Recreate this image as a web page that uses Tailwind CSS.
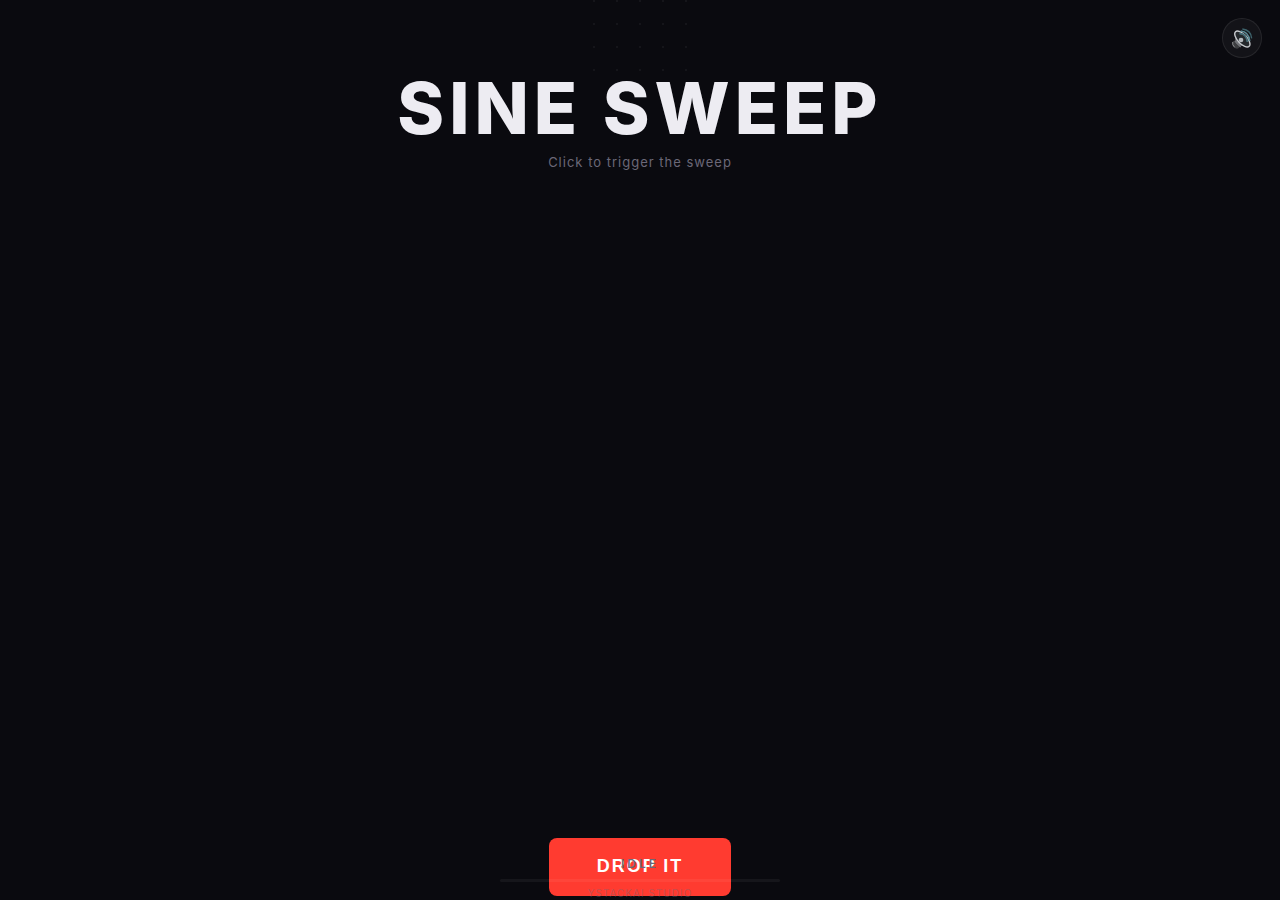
<!DOCTYPE html>
<html lang="en">
<head>
    <meta charset="UTF-8">
    <meta name="viewport" content="width=device-width, initial-scale=1.0">
    <title>Sine Sweep</title>
    <script src="https://cdn.jsdelivr.net/npm/@tailwindcss/browser@4"></script>
</head>
<body class="relative flex min-h-screen flex-col items-center justify-between overflow-hidden bg-[#0a0a0f] pt-17 pb-1 font-['Inter',sans-serif] text-[#edecf2]">

    <!-- Dot grid -->
    <svg class="pointer-events-none absolute top-0 left-1/2 h-18 w-24 -translate-x-1/2" viewBox="0 0 96 72" fill="#15151a" aria-hidden="true">
        <path d="M1 0h2v2h-2zM24 0h2v2h-2zM47 0h2v2h-2zM70 0h2v2h-2zM93 0h2v2h-2z"/>
        <path d="M1 23h2v2h-2zM24 23h2v2h-2zM47 23h2v2h-2zM70 23h2v2h-2zM93 23h2v2h-2z"/>
        <path d="M1 46h2v2h-2zM24 46h2v2h-2zM47 46h2v2h-2zM70 46h2v2h-2zM93 46h2v2h-2z"/>
        <path d="M1 69h2v2h-2zM24 69h2v2h-2zM47 69h2v2h-2zM70 69h2v2h-2zM93 69h2v2h-2z"/>
    </svg>

    <button type="button" aria-label="Toggle sound" class="absolute top-[18px] right-[18px] flex size-10 items-center justify-center rounded-full border border-white/8 bg-white/4">
        <svg class="size-[22px]" viewBox="0 0 66 66" fill="none" aria-hidden="true">
            <!-- magnet -->
            <ellipse cx="15" cy="53" rx="13" ry="10" transform="rotate(45 15 53)" fill="#3c3d40"/>
            <path d="M5 45q-2 8 6 16" stroke="#88898c" stroke-width="3"/>
            <path d="M12 42l17 18" stroke="#75767a" stroke-width="4"/>
            <!-- cone -->
            <path d="M13 22L13 44Q20 57 31 56L52 60Z" fill="#707277"/>
            <ellipse cx="34" cy="36" rx="31" ry="15" transform="rotate(47 34 36)" fill="#25292d"/>
            <ellipse cx="34" cy="36" rx="30" ry="14" transform="rotate(47 34 36)" stroke="#c6c9cd" stroke-width="4"/>
            <circle cx="30" cy="39" r="7" fill="#b4b8bd"/>
            <!-- sound waves -->
            <path d="M25 20Q46 19 49 45" stroke="#466c76" stroke-width="5"/>
            <path d="M29 12Q53 14 56 42" stroke="#5d8c97" stroke-width="5"/>
            <path d="M34 6Q60 9 62 34" stroke="#3d626b" stroke-width="4"/>
        </svg>
    </button>

    <header class="relative text-center">
        <h1 class="text-[71px] leading-20 font-extrabold tracking-[5px]">SINE SWEEP</h1>
        <p class="mt-1 text-[13px] leading-5 tracking-[1px] text-[#6b6878]">Click to trigger the sweep</p>
    </header>

    <button type="button" class="rounded-lg bg-[#ff3b30] px-12 pt-[18px] pb-5 font-['Liberation_Sans',sans-serif] text-lg leading-5 font-bold tracking-[2px] text-white">DROP IT</button>

    <!-- Status readout, drawn over the button -->
    <div class="pointer-events-none absolute bottom-0 left-1/2 flex w-70 -translate-x-1/2 flex-col items-center">
        <p class="text-xs leading-4 font-semibold tracking-[3px] text-[#6b6878]">IDLE</p>
        <div class="mt-[7px] h-[3px] w-full rounded-sm bg-white/5"></div>
        <p class="mt-1 text-[10px] leading-[14px] tracking-[1px] text-[#6b6878]/40">YSTACKAI STUDIO</p>
    </div>

</body>
</html>
